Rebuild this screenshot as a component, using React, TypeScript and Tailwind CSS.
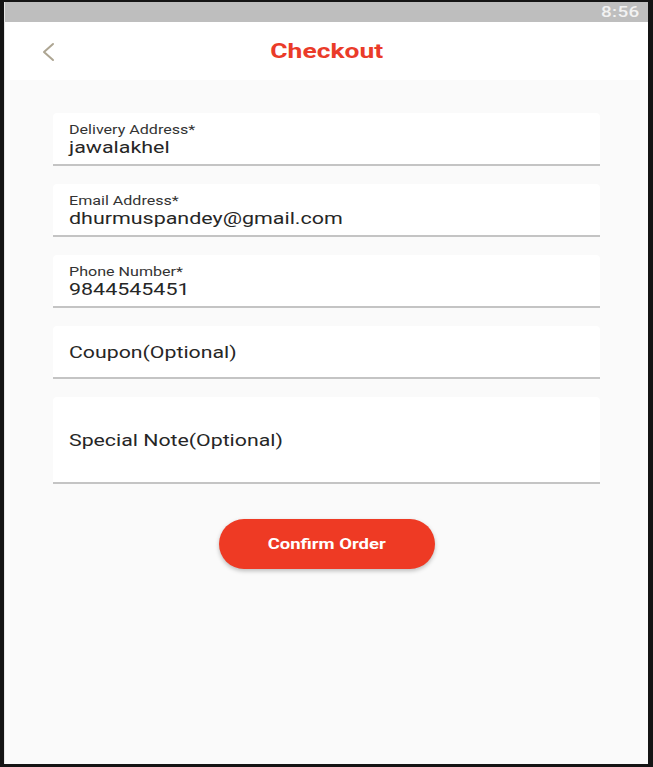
const Field = ({ label, value }: { label: string; value: string }) => (
  <div className="h-[53px] rounded-t-[4px] border-b-2 border-[#c4c4c4] bg-white px-4 pt-[10px]">
    <div className="text-[12px] leading-[14px] text-[#333333]">
      <span className="inline-block origin-left scale-x-[1.34]">{label}</span>
    </div>
    <div className="mt-[1px] text-[16px] leading-[20px] text-[#262626]">
      <span className="inline-block origin-left scale-x-[1.34]">{value}</span>
    </div>
  </div>
);

const PlaceholderField = ({ text, tall }: { text: string; tall?: boolean }) => (
  <div
    className={`flex items-center rounded-t-[4px] border-b-2 border-[#c4c4c4] bg-white px-4 pt-[3px] ${
      tall ? "h-[87px]" : "h-[53px]"
    }`}
  >
    <span className="inline-block origin-left scale-x-[1.33] text-[16px] text-[#262626]">{text}</span>
  </div>
);

const App = () => {
  return (
    <div
      className="flex h-[767px] w-[653px] bg-[#141414] pl-[4px] pr-[5px] pt-[2px] pb-[3px]"
      style={{ fontFamily: "Roboto, 'Liberation Sans', sans-serif" }}
    >
      <div className="flex flex-1 flex-col border-l border-[#e6e6e6] bg-[#fafafa]">
        {/* status bar */}
        <div className="flex h-[20px] items-center justify-end bg-[#bebebe] pr-[8px]">
          <span className="inline-block origin-right scale-x-[1.35] text-[14px] font-medium tracking-[0.3px] text-[#f2f2f2]">
            8:56
          </span>
        </div>

        {/* app bar */}
        <div className="relative flex h-[58px] items-center justify-center bg-white">
          <svg
            className="absolute left-[34px] top-[20px]"
            width="20"
            height="20"
            viewBox="0 0 20 20"
            fill="none"
          >
            <polyline
              points="14,2 5,10 14,18"
              stroke="#ada592"
              strokeWidth="2"
              strokeLinecap="round"
              strokeLinejoin="round"
            />
          </svg>
          <h1 className="inline-block scale-x-[1.32] text-[20px] font-bold text-[#ea3b29]">Checkout</h1>
        </div>

        {/* form */}
        <div className="flex flex-col gap-[18px] px-[48px] pt-[33px]">
          <Field label="Delivery Address*" value="jawalakhel" />
          <Field label="Email Address*" value="dhurmuspandey@gmail.com" />
          <Field label="Phone Number*" value="9844545451" />
          <PlaceholderField text="Coupon(Optional)" />
          <PlaceholderField text="Special Note(Optional)" tall />
        </div>

        <div className="flex justify-center pt-[35px]">
          <button className="h-[50px] w-[216px] rounded-full bg-[#ee3a24] text-[14px] font-bold text-white shadow-[0_2px_4px_rgba(0,0,0,0.25)]">
            <span className="inline-block scale-x-[1.32]">Confirm Order</span>
          </button>
        </div>
      </div>
    </div>
  );
};

export default App;
